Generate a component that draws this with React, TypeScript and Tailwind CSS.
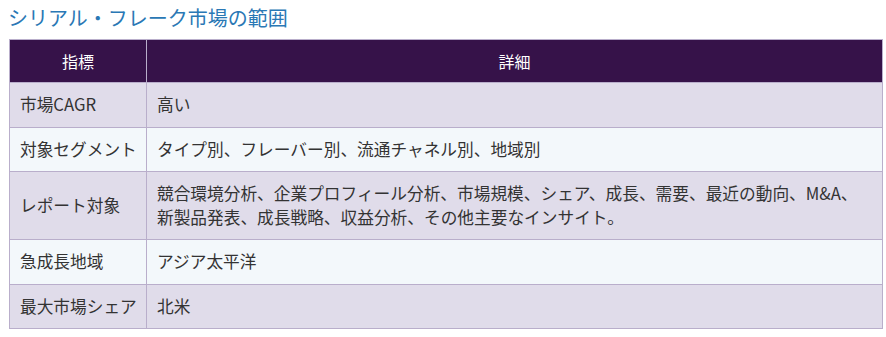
import React from "react";

const rows: [string, string][] = [
  ["市場CAGR", "高い"],
  ["対象セグメント", "タイプ別、フレーバー別、流通チャネル別、地域別"],
  [
    "レポート対象",
    "競合環境分析、企業プロフィール分析、市場規模、シェア、成長、需要、最近の動向、M&A、新製品発表、成長戦略、収益分析、その他主要なインサイト。",
  ],
  ["急成長地域", "アジア太平洋"],
  ["最大市場シェア", "北米"],
];

export default function App() {
  return (
    <div
      className="w-[886px] h-[337px] bg-white px-[9px] pt-[3px]"
      style={{ fontFamily: '"Noto Sans CJK JP", "Noto Sans", sans-serif' }}
    >
      <h2 className="text-[20px] leading-[30px] text-[#2a78b5] font-normal -ml-px mb-[6px]">
        シリアル・フレーク市場の範囲
      </h2>
      <table className="w-[874px] table-fixed border-collapse text-[16.7px] leading-[23.5px] text-[#333]">
        <thead>
          <tr className="bg-[#361249] text-white">
            <th className="w-[137px] border border-[#b9aecb] py-[9px] text-[16px] leading-[24px] font-normal text-center">
              指標
            </th>
            <th className="border border-[#b9aecb] py-[9px] text-[16px] leading-[24px] font-normal text-center">
              詳細
            </th>
          </tr>
        </thead>
        <tbody>
          {rows.map(([k, v], i) => (
            <tr key={k} className={i % 2 === 0 ? "bg-[#e0dcea]" : "bg-[#f3f8fb]"}>
              <td className="border border-[#b9aecb] px-[10px] py-[10px] align-middle whitespace-nowrap">
                {k}
              </td>
              <td className="border border-[#b9aecb] px-[10px] py-[10px] align-middle">{v}</td>
            </tr>
          ))}
        </tbody>
      </table>
    </div>
  );
}
